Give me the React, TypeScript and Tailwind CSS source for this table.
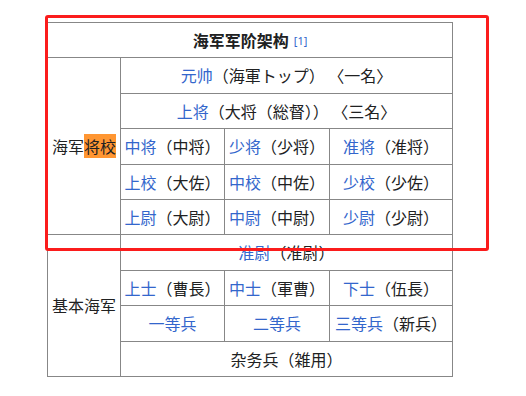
import React from "react";

const cell =
  "border border-[#878787] p-0 text-center align-middle whitespace-nowrap";
const blue = "text-[#3366cc]";
const jp = "font-['Noto_Sans_CJK_JP','Noto_Sans_CJK_SC',sans-serif]";

function R({ l, p, h }: { l: string; p?: string; h: string }) {
  return (
    <>
      <span className={blue}>{l}</span>
      {p ? <span className={jp}>{p}</span> : null}
    </>
  );
}

export default function App() {
  return (
    <div className="relative w-[526px] h-[396px] bg-white overflow-hidden text-[#202122] font-['Noto_Sans_CJK_SC',sans-serif] text-[16px]">
      <div className="h-[22px] overflow-hidden">
        <div className="pl-[68px] -mt-[21px] leading-[23px] text-[#202122]">参考</div>
      </div>
      <div className="pl-[47px]">
        <table className="border-collapse table-fixed w-[405px] leading-[23px]">
          <colgroup>
            <col className="w-[73px]" />
            <col className="w-[104px]" />
            <col className="w-[105px]" />
            <col className="w-[123px]" />
          </colgroup>
          <tbody>
            <tr>
              <th colSpan={4} className={`${cell} h-[35px] font-bold`}>
                海军军阶架构
                <sup className={`${blue} font-normal font-['Noto_Sans',sans-serif] text-[11px] ml-[5px] relative -top-[2px]`}>
                  [1]
                </sup>
              </th>
            </tr>
            <tr>
              <td rowSpan={5} className={cell}>
                海军<span className="bg-[#ff9632]">将校</span>
              </td>
              <td colSpan={3} className={`${cell} h-[36px]`}>
                <R l="元帅" p="（海軍トップ） 〈一名〉" h="" />
              </td>
            </tr>
            <tr>
              <td colSpan={3} className={`${cell} h-[35px]`}>
                <R l="上将" p="（大将（総督）） 〈三名〉" h="" />
              </td>
            </tr>
            <tr>
              <td className={`${cell} h-[36px]`}><R l="中将" p="（中将）" h="" /></td>
              <td className={cell}><R l="少将" p="（少将）" h="" /></td>
              <td className={cell}><R l="准将" p="（准将）" h="" /></td>
            </tr>
            <tr>
              <td className={`${cell} h-[35px]`}><R l="上校" p="（大佐）" h="" /></td>
              <td className={cell}><R l="中校" p="（中佐）" h="" /></td>
              <td className={cell}><R l="少校" p="（少佐）" h="" /></td>
            </tr>
            <tr>
              <td className={`${cell} h-[35px]`}><R l="上尉" p="（大尉）" h="" /></td>
              <td className={cell}><R l="中尉" p="（中尉）" h="" /></td>
              <td className={cell}><R l="少尉" p="（少尉）" h="" /></td>
            </tr>
            <tr>
              <td rowSpan={4} className={cell}>基本海军</td>
              <td colSpan={3} className={`${cell} h-[36px]`}>
                <R l="准尉" p="（准尉）" h="" />
              </td>
            </tr>
            <tr>
              <td className={`${cell} h-[35px]`}><R l="上士" p="（曹長）" h="" /></td>
              <td className={cell}><R l="中士" p="（軍曹）" h="" /></td>
              <td className={cell}><R l="下士" p="（伍長）" h="" /></td>
            </tr>
            <tr>
              <td className={`${cell} h-[36px]`}><R l="一等兵" h="" /></td>
              <td className={cell}><R l="二等兵" h="" /></td>
              <td className={cell}><R l="三等兵" p="（新兵）" h="" /></td>
            </tr>
            <tr>
              <td colSpan={3} className={`${cell} h-[35px]`}>
                <span className={jp}>杂务兵</span><span className={jp}>（雑用）</span>
              </td>
            </tr>
          </tbody>
        </table>
      </div>
      <div className="absolute left-[45px] top-[15px] w-[444px] h-[236px] border-[3px] border-[#fb1c1c] rounded-[3px] pointer-events-none" />
    </div>
  );
}
